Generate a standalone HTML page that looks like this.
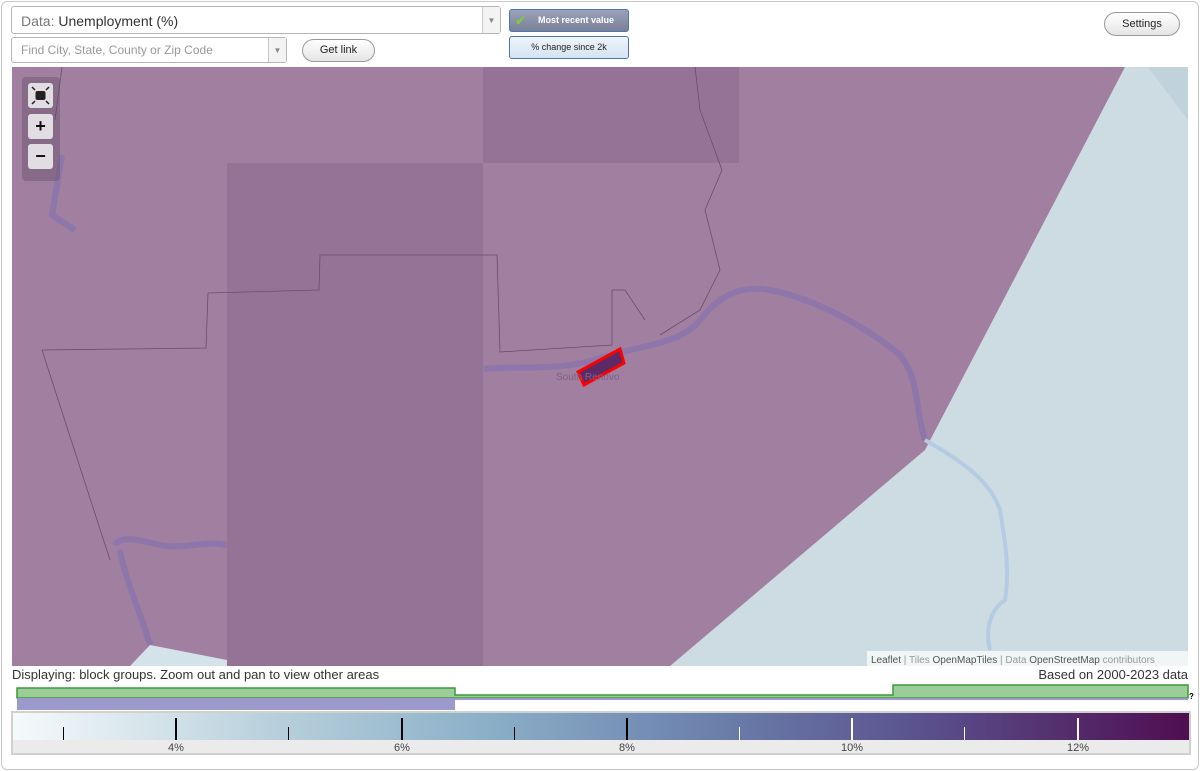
<!DOCTYPE html>
<html><head><meta charset="utf-8"><style>
*{box-sizing:border-box;margin:0;padding:0}
body{width:1200px;height:771px;background:#fff;font-family:"Liberation Sans",sans-serif;position:relative;overflow:hidden}
.frame{position:absolute;left:1px;top:1px;width:1198px;height:769px;border:1px solid #c8c8c8;border-radius:6px}
.sel{position:absolute;background:#fff;border:1px solid #b5b5b5;border-radius:3px}
.sel .arr{position:absolute;right:0;top:0;bottom:0;width:18px;border-left:1px solid #ccc;background:#f3f3f3;color:#888;font-size:8px;text-align:center}
.btn{position:absolute;border:1px solid #999;border-radius:12px;background:linear-gradient(#fff,#e4e4e4);font-size:11px;color:#222;text-align:center}
.tog{position:absolute;border:1px solid #4a77b0;border-radius:3px;font-size:9px;text-align:center}
.ctl{position:absolute;left:22px;top:77px;width:38px;height:104px;background:rgba(90,70,90,.35);border-radius:4px}
.ctl div{position:absolute;left:6px;width:25px;height:25px;background:#e2dde2;border-radius:3px;text-align:center;font-weight:bold;font-size:18px;line-height:24px;color:#111}
</style></head><body>
<div class="frame"></div>
<div class="sel" style="left:11px;top:6px;width:490px;height:28px"><span style="position:absolute;left:9px;top:6px;font-size:14px;color:#333"><span style="color:#777">Data:</span> Unemployment (%)</span><div class="arr" style="line-height:27px">▼</div></div>
<div class="sel" style="left:11px;top:37px;width:276px;height:26px"><span style="position:absolute;left:9px;top:5px;font-size:12px;color:#999">Find City, State, County or Zip Code</span><div class="arr" style="line-height:25px">▼</div></div>
<div class="btn" style="left:302px;top:39px;width:73px;height:23px;line-height:21px">Get link</div>
<div class="tog" style="left:509px;top:9px;width:120px;height:23px;background:linear-gradient(#9aa1b8,#7a8098);color:#fff;font-weight:bold;line-height:21px;padding-left:14px"><span style="position:absolute;left:5px;top:0;color:#7c4;font-size:13px">✔</span>Most recent value</div>
<div class="tog" style="left:509px;top:36px;width:120px;height:23px;background:linear-gradient(#eef4fb,#d5e3f2);color:#222;line-height:21px">% change since 2k</div>
<div class="btn" style="left:1104px;top:12px;width:76px;height:24px;line-height:22px">Settings</div>

<svg style="position:absolute;left:12px;top:67px" width="1176" height="599" viewBox="12 67 1176 599">
<rect x="12" y="67" width="1176" height="599" fill="#a07fa0"/>
<rect x="227" y="163" width="256" height="503" fill="#957396"/>
<rect x="483" y="67" width="256" height="96" fill="#957396"/>
<polygon points="1125,67 1188,67 1188,666 670,666 925,450" fill="#cddce2"/>
<polygon points="1148,67 1188,67 1188,120" fill="#c0d2dc"/>
<polygon points="130,666 150,645 227,660 227,666" fill="#d4e2ea"/>
<g fill="none" stroke="#8a74ad" stroke-width="6" opacity=".8">
<path d="M484,369 C520,365 560,372 600,358 C640,345 680,345 700,320 C720,295 740,285 770,290 C820,300 870,330 900,355 C920,380 915,410 925,440"/>
<path d="M62,155 L52,215 L75,230"/>
<path d="M115,545 C120,535 140,540 160,545 C185,550 200,540 227,545"/>
<path d="M120,550 C125,580 140,610 150,645"/>
</g>
<path d="M925,440 C960,460 990,480 1000,510 C1005,540 1010,570 1005,600 C990,610 985,630 990,650" fill="none" stroke="#b4cbe3" stroke-width="4"/>
<g fill="none" stroke="#6c4c6c" stroke-width=".8">
<path d="M42,350 L206,348 L208,293 L319,290 L320,255 L497,255 L500,352 L612,345 L612,290 L625,290 L645,320"/>
<path d="M42,350 L110,560"/>
<path d="M695,67 L700,110 L722,170 L705,210 L720,270 L700,310 L660,335"/>
<path d="M62,67 L55,120"/>
</g>
<polygon points="578,372 620,349 624,363 584,385" fill="#5d2a66" stroke="#f00" stroke-width="3"/>
<text x="556" y="380" font-size="10" fill="#7c6488">South Renovo</text>
<rect x="867" y="651" width="321" height="15" fill="rgba(255,255,255,.7)"/>
<text x="871" y="663" font-size="10" fill="#999"><tspan fill="#555">Leaflet</tspan> | Tiles <tspan fill="#555">OpenMapTiles</tspan> | Data <tspan fill="#555">OpenStreetMap</tspan> contributors</text>
</svg>
<div class="ctl"><div style="top:6px"><svg width="25" height="25" viewBox="0 0 25 25"><rect x="7.5" y="8" width="10" height="9" rx="2" fill="#222"/><g stroke="#222" stroke-width="1.5"><path d="M4,4 l3,3 M21,4 l-3,3 M4,21 l3,-3 M21,21 l-3,-3"/></g></svg></div><div style="top:37px">+</div><div style="top:67px">−</div></div>

<div style="position:absolute;left:12px;top:667px;font-size:13px;color:#333">Displaying: block groups. Zoom out and pan to view other areas</div>
<div style="position:absolute;right:12px;top:667px;font-size:13px;color:#333">Based on 2000-2023 data</div>
<svg style="position:absolute;left:0;top:680px" width="1200" height="32">
<path d="M17,8 H455 V15 H893 V5 H1188 V18 H17Z" fill="#9bcd98" stroke="#3a9a3a" stroke-width="1.5"/>
<rect x="17" y="18" width="1171" height="2" fill="#9c99cc"/>
<rect x="17" y="18" width="438" height="12" fill="#9c99cc"/>
<text x="1189" y="19" font-size="8" font-weight="bold">?</text>
</svg>
<div style="position:absolute;left:11px;top:711px;width:1180px;height:44px;border:2px solid #d0d0d0;background:#ebebeb"></div>
<div style="position:absolute;left:13px;top:713px;width:1176px;height:27px;background:linear-gradient(90deg,#f5fafb,#b8d0dc 22%,#8cb0c8 40%,#6a7fab 60%,#5a4f8c 78%,#4f0e50)"></div>
<svg style="position:absolute;left:13px;top:713px" width="1176" height="42">
<g stroke-width="1"><line x1="50.5" y1="14" x2="50.5" y2="27" stroke="#000"/><line x1="275.5" y1="14" x2="275.5" y2="27" stroke="#000"/><line x1="501.5" y1="14" x2="501.5" y2="27" stroke="#000"/><line x1="726.5" y1="14" x2="726.5" y2="27" stroke="#fff"/><line x1="951.5" y1="14" x2="951.5" y2="27" stroke="#fff"/></g>
<g stroke-width="2"><line x1="163" y1="5" x2="163" y2="27" stroke="#000"/><line x1="389" y1="5" x2="389" y2="27" stroke="#000"/><line x1="614" y1="5" x2="614" y2="27" stroke="#000"/><line x1="839" y1="5" x2="839" y2="27" stroke="#fff"/><line x1="1065" y1="5" x2="1065" y2="27" stroke="#fff"/></g>
<g font-size="11" fill="#444" text-anchor="middle"><text x="163" y="38">4%</text><text x="389" y="38">6%</text><text x="614" y="38">8%</text><text x="839" y="38">10%</text><text x="1065" y="38">12%</text></g>
</svg>
</body></html>
